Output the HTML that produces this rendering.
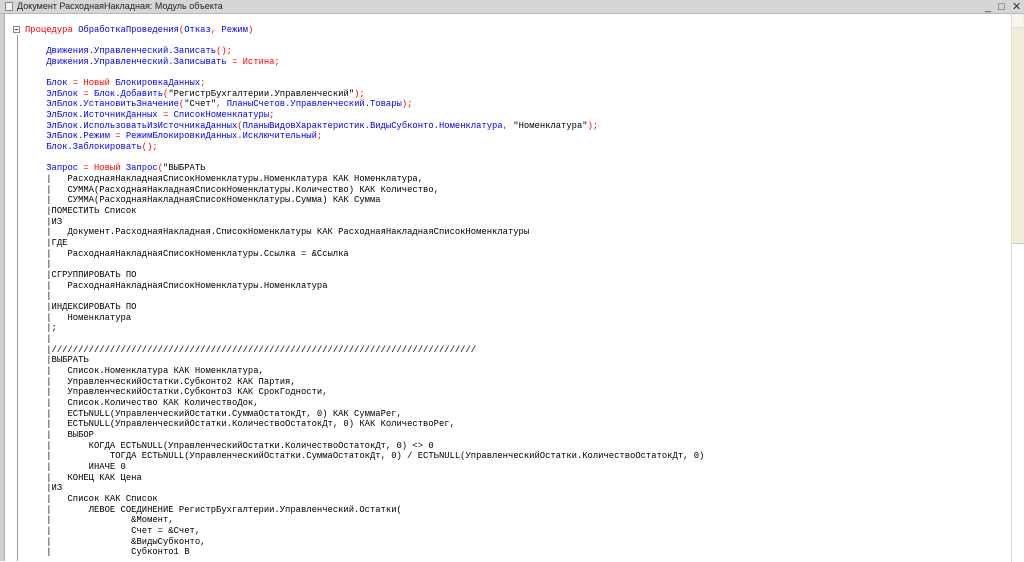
<!DOCTYPE html>
<html><head><meta charset="utf-8"><style>
body{margin:0;width:1024px;height:561px;overflow:hidden;background:#fff;position:relative;font-family:"Liberation Sans",sans-serif}
#title{position:absolute;left:0;top:0;width:1024px;height:13px;background:#d6d6d6;border-bottom:1px solid #b8b8b8}
#title span{position:absolute;left:17px;top:0px;font-size:9px;color:#222;line-height:13px}
#ic{position:absolute;left:5px;top:2px;width:8px;height:9px;border:1px solid #888;background:#f4f4f4;box-sizing:border-box}
#leftb{position:absolute;left:0;top:14px;width:4px;height:547px;background:#d0d0d0;border-right:1px solid #aaa}
#vline{position:absolute;left:17px;top:35px;width:1px;height:526px;background:#999}
#fold{position:absolute;left:13px;top:26px;width:7px;height:7px;border:1px solid #888;background:#fff;box-sizing:border-box}
#fold:after{content:"";position:absolute;left:1px;top:2px;width:3px;height:1px;background:#444}
#sb{position:absolute;left:1011px;top:14px;width:12px;height:547px;background:#f1edd8;border-left:1px solid #ddd}
#sbb{position:absolute;left:1012px;top:14px;width:11px;height:13px;background:#f8f6ec;border-bottom:1px solid #ddd}
#sbt{position:absolute;left:1011px;top:243px;width:12px;height:318px;background:#fff;border-left:1px solid #ddd;border-top:1px solid #ccc}
pre{position:absolute;left:25px;top:24.5px;margin:0;font-family:"Liberation Mono",monospace;font-size:8.85px;line-height:10.67px;color:#000}
.k{color:#f00}.b{color:#0000ff}
.btn{position:absolute;top:1px;font-size:11px;color:#333;line-height:12px}
</style></head><body>
<div id="title"><div id="ic"></div><span>Документ РасходнаяНакладная: Модуль объекта</span>
<div class="btn" style="left:985px">_</div><div class="btn" style="left:998px">□</div><div class="btn" style="left:1012px">✕</div></div>
<div id="leftb"></div><div id="vline"></div><div id="fold"></div>
<div id="sb"></div><div id="sbb"></div><div id="sbt"></div>
<pre><span class="k">Процедура</span> <span class="b">ОбработкаПроведения</span><span class="k">(</span><span class="b">Отказ</span><span class="k">,</span> <span class="b">Режим</span><span class="k">)</span>

    <span class="b">Движения.Управленческий.Записать</span><span class="k">();</span>
    <span class="b">Движения.Управленческий.Записывать</span> <span class="k">= Истина;</span>

    <span class="b">Блок</span> <span class="k">= Новый</span> <span class="b">БлокировкаДанных</span><span class="k">;</span>
    <span class="b">ЭлБлок</span> <span class="k">=</span> <span class="b">Блок.Добавить</span><span class="k">(</span>"РегистрБухгалтерии.Управленческий"<span class="k">);</span>
    <span class="b">ЭлБлок.УстановитьЗначение</span><span class="k">(</span>"Счет"<span class="k">,</span> <span class="b">ПланыСчетов.Управленческий.Товары</span><span class="k">);</span>
    <span class="b">ЭлБлок.ИсточникДанных</span> <span class="k">=</span> <span class="b">СписокНоменклатуры</span><span class="k">;</span>
    <span class="b">ЭлБлок.ИспользоватьИзИсточникаДанных</span><span class="k">(</span><span class="b">ПланыВидовХарактеристик.ВидыСубконто.Номенклатура</span><span class="k">,</span> "Номенклатура"<span class="k">);</span>
    <span class="b">ЭлБлок.Режим</span> <span class="k">=</span> <span class="b">РежимБлокировкиДанных.Исключительный</span><span class="k">;</span>
    <span class="b">Блок.Заблокировать</span><span class="k">();</span>

    <span class="b">Запрос</span> <span class="k">= Новый</span> <span class="b">Запрос</span><span class="k">(</span>"ВЫБРАТЬ
    |   РасходнаяНакладнаяСписокНоменклатуры.Номенклатура КАК Номенклатура,
    |   СУММА(РасходнаяНакладнаяСписокНоменклатуры.Количество) КАК Количество,
    |   СУММА(РасходнаяНакладнаяСписокНоменклатуры.Сумма) КАК Сумма
    |ПОМЕСТИТЬ Список
    |ИЗ
    |   Документ.РасходнаяНакладная.СписокНоменклатуры КАК РасходнаяНакладнаяСписокНоменклатуры
    |ГДЕ
    |   РасходнаяНакладнаяСписокНоменклатуры.Ссылка = &amp;Ссылка
    |
    |СГРУППИРОВАТЬ ПО
    |   РасходнаяНакладнаяСписокНоменклатуры.Номенклатура
    |
    |ИНДЕКСИРОВАТЬ ПО
    |   Номенклатура
    |;
    |
    |////////////////////////////////////////////////////////////////////////////////
    |ВЫБРАТЬ
    |   Список.Номенклатура КАК Номенклатура,
    |   УправленческийОстатки.Субконто2 КАК Партия,
    |   УправленческийОстатки.Субконто3 КАК СрокГодности,
    |   Список.Количество КАК КоличествоДок,
    |   ЕСТЬNULL(УправленческийОстатки.СуммаОстатокДт, 0) КАК СуммаРег,
    |   ЕСТЬNULL(УправленческийОстатки.КоличествоОстатокДт, 0) КАК КоличествоРег,
    |   ВЫБОР
    |       КОГДА ЕСТЬNULL(УправленческийОстатки.КоличествоОстатокДт, 0) &lt;&gt; 0
    |           ТОГДА ЕСТЬNULL(УправленческийОстатки.СуммаОстатокДт, 0) / ЕСТЬNULL(УправленческийОстатки.КоличествоОстатокДт, 0)
    |       ИНАЧЕ 0
    |   КОНЕЦ КАК Цена
    |ИЗ
    |   Список КАК Список
    |       ЛЕВОЕ СОЕДИНЕНИЕ РегистрБухгалтерии.Управленческий.Остатки(
    |               &amp;Момент,
    |               Счет = &amp;Счет,
    |               &amp;ВидыСубконто,
    |               Субконто1 В</pre>
</body></html>
